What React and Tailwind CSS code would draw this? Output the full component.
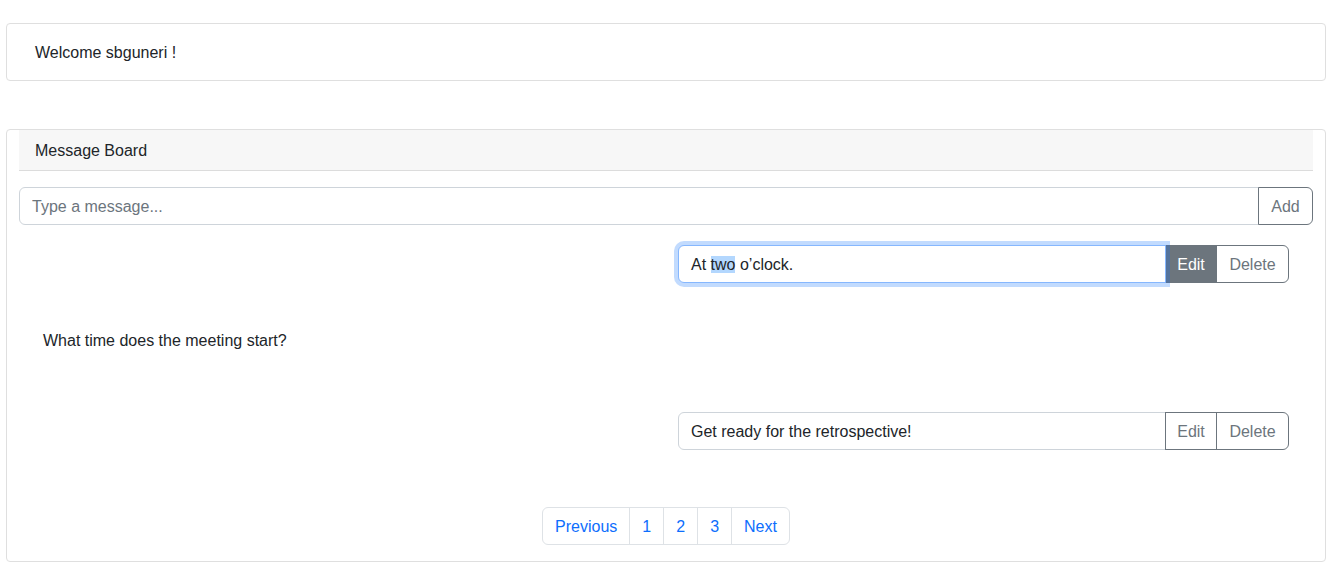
import { useState } from "react";

const messages = [
  { id: 1, text: "At", highlighted: "two", rest: "o’clock.", mine: true, editing: true },
  { id: 2, text: "What time does the meeting start?", mine: false },
  { id: 3, text: "Get ready for the retrospective!", mine: true, editing: false },
];

function MyMessage({ msg }) {
  return (
    <div className="flex justify-end pr-[24px]">
      <div className="flex w-[611px] h-[38px]">
        {msg.editing ? (
          <div className="relative z-10 flex-1 flex items-center px-[12px] border border-[#86b7fe] rounded-l-[6px] shadow-[0_0_0_4px_rgba(13,110,253,0.25)] bg-white">
            <span className="pt-px">
              {msg.text} <span className="bg-[#b3d7fe]">{msg.highlighted}</span> {msg.rest}
            </span>
          </div>
        ) : (
          <div className="flex-1 flex items-center px-[12px] border border-[#ced4da] rounded-l-[6px] bg-white">
            <span className="pt-px">{msg.text}</span>
          </div>
        )}
        {msg.editing ? (
          <button className="w-[52px] -ml-px pt-px bg-[#6c757d] border border-[#6c757d] text-white">Edit</button>
        ) : (
          <button className="w-[52px] -ml-px pt-px border border-[#6c757d] text-[#6c757d]">Edit</button>
        )}
        <button className="w-[73px] -ml-px pt-px border border-[#6c757d] text-[#6c757d] rounded-r-[6px]">Delete</button>
      </div>
    </div>
  );
}

export default function App() {
  const [draft, setDraft] = useState("");

  return (
    <div className="min-h-screen bg-white text-[16px] leading-[24px] text-[#212529] font-['Liberation_Sans',Arial,sans-serif]">
      <div className="ml-[6px] w-[1320px] pt-[23px]">
        <div className="border border-[#dfdfdf] rounded-[4px] px-[28px] pt-[17px] pb-[15px]">
          Welcome sbguneri !
        </div>

        <div className="mt-[48px] border border-[#dfdfdf] rounded-[4px] px-[12px] pb-[16px]">
          <div className="h-[41px] flex items-center px-[16px] pt-px bg-[#f7f7f7] border-b border-[#dcdcdc]">
            Message Board
          </div>

          <div className="mt-[16px] flex h-[38px]">
            <input
              value={draft}
              onChange={(e) => setDraft(e.target.value)}
              placeholder="Type a message..."
              className="flex-1 px-[12px] pt-px border border-[#ced4da] rounded-l-[6px] outline-none placeholder:text-[#6c757d]"
            />
            <button className="w-[55px] -ml-px pt-px border border-[#6c757d] text-[#6c757d] rounded-r-[6px]">Add</button>
          </div>

          <div className="mt-[20px]">
            <MyMessage msg={messages[0]} />
          </div>
          <div className="mt-[46px] mb-[-1px] pl-[24px]">{messages[1].text}</div>
          <div className="mt-[60px]">
            <MyMessage msg={messages[2]} />
          </div>

          <div className="mt-[57px] flex justify-center">
            <div className="flex h-[38px] text-[#0d6efd]">
              <a className="flex items-center px-[12px] pt-px border border-[#dee2e6] rounded-l-[6px]" href="#">Previous</a>
              <a className="flex items-center px-[12px] pt-px -ml-px border border-[#dee2e6]" href="#">1</a>
              <a className="flex items-center px-[12px] pt-px -ml-px border border-[#dee2e6]" href="#">2</a>
              <a className="flex items-center px-[12px] pt-px -ml-px border border-[#dee2e6]" href="#">3</a>
              <a className="flex items-center px-[12px] pt-px -ml-px border border-[#dee2e6] rounded-r-[6px]" href="#">Next</a>
            </div>
          </div>
        </div>
      </div>
    </div>
  );
}
